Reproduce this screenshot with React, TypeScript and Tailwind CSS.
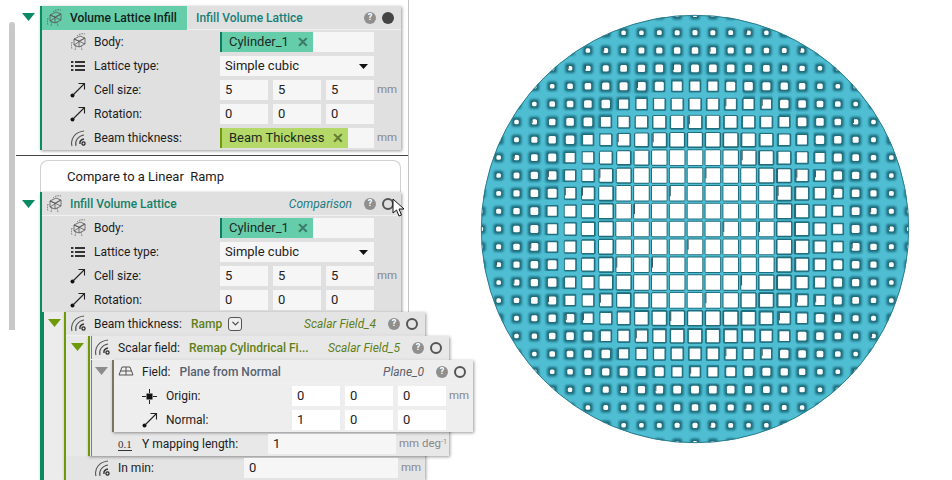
import { ChevronDown } from 'lucide-react';
import type { ReactNode } from 'react';

const font = "font-['Roboto','Liberation_Sans',sans-serif]";

function LatticeIcon() {
    return (
        <svg width="17" height="18" viewBox="0 0 17 18" fill="none" stroke="#555" strokeWidth="0.8">
            <path d="M4 6 L10 3 L15 5 L15 11 L9 14 L4 12 Z" />
            <path d="M4 6 L9 8 L15 5 M9 8 L9 14 M4 12 L15 5 M4 6 L15 11" />
            <path d="M7 3 Q10 0 15 1 M2 9 Q1 13 2 16 M6 13 L5 17 M11 13 L12 17" strokeDasharray="1.5 1" />
        </svg>
    );
}

function ListIcon() {
    return (
        <svg width="16" height="12" viewBox="0 0 16 12" fill="#333">
            <rect x="1" y="1" width="2.4" height="2" />
            <rect x="1" y="5" width="2.4" height="2" />
            <rect x="1" y="9" width="2.4" height="2" />
            <rect x="5" y="1" width="10" height="2" />
            <rect x="5" y="5" width="10" height="2" />
            <rect x="5" y="9" width="10" height="2" />
        </svg>
    );
}

function VectorIcon() {
    return (
        <svg width="16" height="16" viewBox="0 0 16 16" fill="none" stroke="#222" strokeWidth="1.1">
            <circle cx="2.5" cy="13.5" r="2" fill="#111" stroke="none" />
            <path d="M3 13 L14.5 1.5 M8.5 1.5 L14.5 1.5 L14.5 7.5" />
        </svg>
    );
}

function WavesIcon() {
    return (
        <svg width="17" height="17" viewBox="0 0 17 17" fill="none" stroke="#555" strokeWidth="1.1">
            <path d="M2 16 C0 9 5 2 14 1" />
            <path d="M6 16 C4.5 11 8 6 14 5" />
            <path d="M10 14 C9.5 11 11 9.5 14 9" strokeWidth="1.4" stroke="#333" />
            <circle cx="13.5" cy="13.5" r="1.6" stroke="#222" strokeWidth="1.2" />
        </svg>
    );
}

function OriginIcon() {
    return (
        <svg width="15" height="15" viewBox="0 0 15 15" stroke="#222" strokeWidth="1">
            <path d="M7.5 0 V4 M7.5 11 V15 M0 7.5 H4 M11 7.5 H15" />
            <rect x="4.5" y="4.5" width="6" height="6" fill="#111" stroke="none" />
        </svg>
    );
}

function PlaneIcon() {
    return (
        <svg width="16" height="11" viewBox="0 0 16 11" fill="none" stroke="#555" strokeWidth="1">
            <path d="M4 1 H12 L15 9 H1 Z M8 1 V9 M2.5 5 H13.5" />
        </svg>
    );
}

function Triangle({ color }: { color: string }) {
    return (
        <svg width="13" height="8" viewBox="0 0 13 8" className="block mx-auto">
            <polygon points="0,0 13,0 6.5,8" fill={color} />
        </svg>
    );
}

function HeaderButtons({ filled }: { filled?: boolean }) {
    return (
        <div className="flex items-center gap-[6px] ml-[12px]">
            <div className="w-3 h-3 rounded-full bg-[#8f8f8f] text-white text-[9px] font-bold flex items-center justify-center">?</div>
            <div className={filled ? 'w-3 h-3 rounded-full bg-[#444]' : 'w-3 h-3 rounded-full border-2 border-[#555]'} />
        </div>
    );
}

function Panel({ line, bg, inset, children }: { line: string; bg: string; inset?: string; children: ReactNode }) {
    return (
        <div className={`w-[361px] shrink-0 border-l-2 ${inset ?? 'shadow-[1px_1px_3px_rgba(0,0,0,0.4)]'} ${line} ${bg}`}>
            {children}
        </div>
    );
}

function Header({ icon, children, meta, metaColor, filled }: { icon: ReactNode; children: ReactNode; meta?: string; metaColor?: string; filled?: boolean }) {
    return (
        <div className="flex items-center h-6 border-b border-[#f0f0f0] pl-[4px] pr-[7px]">
            <div className="w-[24px] shrink-0">{icon}</div>
            <div className="flex items-center flex-1 min-w-0">{children}</div>
            {meta && <span className={`italic text-[12px] ${metaColor}`}>{meta}</span>}
            <HeaderButtons filled={filled} />
        </div>
    );
}

function Row({ icon, label, unit, children }: { icon: ReactNode; label: string; unit?: ReactNode; children: ReactNode }) {
    return (
        <div className="flex items-center h-6 pl-[28px]">
            <div className="w-[24px] shrink-0">{icon}</div>
            <div className="w-[126px] shrink-0 text-[12px] text-[#1c1c1c]">{label}</div>
            {children}
            {unit && <span className="ml-[3px] text-[11.5px] text-[#888] whitespace-nowrap">{unit}</span>}
        </div>
    );
}

function Fields({ values, bg }: { values: string[]; bg: string }) {
    return (
        <div className="flex w-[154px] gap-[5px]">
            {values.map((v, i) => (
                <div key={i} className={`flex-1 h-5 pl-[5px] text-[13px] leading-5 text-[#222] ${bg}`}>{v}</div>
            ))}
        </div>
    );
}

function Chip({ name, green }: { name: string; green?: boolean }) {
    return (
        <div className="flex w-[154px] h-5 bg-[#f6f6f6]">
            <div className={`flex items-center h-5 border-l-2 pl-[7px] pr-[4px] text-[13px] text-[#1c2a22] ${green ? 'border-[#6f9a0c] bg-[#b4d968]' : 'border-[#0e7c5f] bg-[#66cdaa]'}`}>
                {name}
                <span className={`ml-[8px] text-[14px] leading-none font-bold ${green ? 'text-[#5f7a35]' : 'text-[#3c7a68]'}`}>✕</span>
            </div>
        </div>
    );
}

function Select() {
    return (
        <div className="w-[154px] h-5 bg-[#f6f6f6] flex items-center justify-between pl-[5px] pr-[6px] text-[13px] text-[#222]">
            Simple cubic
            <svg width="9" height="5" viewBox="0 0 9 5"><polygon points="0,0 9,0 4.5,5" fill="#111" /></svg>
        </div>
    );
}

// ramped lattice cross-section, holes shrink towards the rim
const PITCH = 17.85;
const R = 214;
const cells: { x: number; y: number; r: number; hole: number }[] = [];
for (let i = -12; i <= 12; i++) {
    for (let j = -12; j <= 12; j++) {
        const x = i * PITCH;
        const y = j * PITCH;
        const r = Math.hypot(x, y);
        if (r > R + 8) continue;
        const hole = Math.max(4.5, Math.min(14.6, 5 + (197 - r) * 0.08));
        cells.push({ x, y, r, hole });
    }
}

function LatticeDisc() {
    return (
        <svg width="432" height="432" viewBox="-216 -216 432 432" className="block">
            <defs>
                <clipPath id="disc"><circle r={R} /></clipPath>
                <filter id="soft" x="-30%" y="-30%" width="160%" height="160%"><feGaussianBlur stdDeviation="1.1" /></filter>
            </defs>
            <g clipPath="url(#disc)">
                <circle r={R} fill="#4fbdd2" />
                <g filter="url(#soft)">
                    {cells.map((c, k) => {
                        const s = c.hole + 5;
                        return <rect key={k} x={c.x - s / 2} y={c.y - s / 2} width={s} height={s} rx="2" fill="#1a6c7c" />;
                    })}
                </g>
                {cells.filter((c) => c.r < 150).map((c, k) => {
                    const hx = c.x + PITCH / 2;
                    const hy = c.y + PITCH / 2;
                    const w = Math.max(1.3, PITCH - c.hole - 3.4);
                    return (
                        <g key={k} fill="#4fbdd2">
                            <rect x={c.x - PITCH / 2} y={hy - w / 2} width={PITCH} height={w} />
                            <rect x={hx - w / 2} y={c.y - PITCH / 2} width={w} height={PITCH} />
                            <circle cx={hx} cy={hy} r={w / 2 + 1.3} />
                        </g>
                    );
                })}
                {cells.map((c, k) => (
                    <rect key={k} x={c.x - c.hole / 2} y={c.y - c.hole / 2} width={c.hole} height={c.hole} rx={c.hole < 9 ? 1.5 : 0.5} fill="#fff" />
                ))}
                {cells.filter((_, k) => (k * 3) % 7 === 0).map((c, k) => (
                    <rect key={k} x={c.x - c.hole / 2} y={c.y - c.hole / 2} width="0.8" height={c.hole * 0.7} fill="#14313a" />
                ))}
            </g>
            <circle r={R - 0.3} fill="none" stroke="#2a7c8e" strokeWidth="1" />
        </svg>
    );
}

export default function App() {
    return (
        <div className={`relative flex w-[952px] h-[480px] overflow-hidden bg-white ${font}`}>
            <div className="w-4 shrink-0 pl-[9px] pt-[22px]">
                <div className="w-[6px] h-[308px] bg-[#c8c8c8] rounded-t-[3px]" />
            </div>

            <div className="w-[393px] shrink-0 border-r border-[#c4c4c4] pt-[6px]">
                <div className="flex">
                    <div className="w-6 shrink-0 pt-[7px]"><Triangle color="#0a8a64" /></div>
                    <Panel line="border-[#0a8a60]" bg="bg-[#e0e0e0]">
                        <div className="flex items-center h-6 border-b border-[#efefef] pr-[7px]">
                            <div className="flex items-center h-[24px] w-[145px] bg-[#66cdaa] pl-[4px] text-[12px] font-medium text-[#10231c]">
                                <div className="w-[24px] shrink-0"><LatticeIcon /></div>
                                Volume Lattice Infill
                            </div>
                            <span className="ml-[9px] flex-1 text-[12px] font-medium text-[#157f78]">Infill Volume Lattice</span>
                            <HeaderButtons filled />
                        </div>
                        <Row icon={<LatticeIcon />} label="Body:"><Chip name="Cylinder_1" /></Row>
                        <Row icon={<ListIcon />} label="Lattice type:"><Select /></Row>
                        <Row icon={<VectorIcon />} label="Cell size:" unit="mm"><Fields values={['5', '5', '5']} bg="bg-[#f6f6f6]" /></Row>
                        <Row icon={<VectorIcon />} label="Rotation:"><Fields values={['0', '0', '0']} bg="bg-[#f6f6f6]" /></Row>
                        <Row icon={<WavesIcon />} label="Beam thickness:" unit="mm"><Chip name="Beam Thickness" green /></Row>
                    </Panel>
                </div>

                <div className="h-px bg-[#444] mt-[5px]" />

                <div className="ml-6 mt-[4px] w-[361px] h-[32px] border border-b-0 border-[#d0d0d0] rounded-t-lg pl-[26px] pt-[6px] text-[13px] text-[#1c1c1c] whitespace-pre">
                    Compare to a Linear  Ramp
                </div>

                <div className="flex">
                    <div className="w-6 shrink-0 pt-[8px]"><Triangle color="#0a8a64" /></div>
                    <Panel line="border-[#0a8a60]" bg="bg-[#e0e0e0]">
                        <Header icon={<LatticeIcon />} meta="Comparison" metaColor="text-[#1f7a80]">
                            <span className="text-[12px] font-medium text-[#157f68]">Infill Volume Lattice</span>
                        </Header>
                        <Row icon={<LatticeIcon />} label="Body:"><Chip name="Cylinder_1" /></Row>
                        <Row icon={<ListIcon />} label="Lattice type:"><Select /></Row>
                        <Row icon={<VectorIcon />} label="Cell size:" unit="mm"><Fields values={['5', '5', '5']} bg="bg-[#f6f6f6]" /></Row>
                        <Row icon={<VectorIcon />} label="Rotation:"><Fields values={['0', '0', '0']} bg="bg-[#f6f6f6]" /></Row>

                        <div className="flex">
                            <div className="w-[22px] shrink-0 border-l-2 border-[#0a8a60] bg-[#ececec] pt-[7px]"><Triangle color="#6e9a0a" /></div>
                            <Panel line="border-[#6e9a0a]" bg="bg-[#e4e4e4]">
                                <Header icon={<WavesIcon />} meta="Scalar Field_4" metaColor="text-[#5f7f1a]">
                                    <span className="text-[12px] text-[#1c1c1c]">Beam thickness:</span>
                                    <span className="ml-[9px] text-[12px] font-medium text-[#5f7f1a]">Ramp</span>
                                    <span className="ml-[6px] w-[14px] h-[14px] rounded-[3px] border border-[#555] bg-[#eee] flex items-center justify-center">
                                        <ChevronDown size={11} strokeWidth={2.5} color="#444" />
                                    </span>
                                </Header>

                                <div className="flex">
                                    <div className="w-[22px] shrink-0 bg-[#e9e9e9] pt-[7px]"><Triangle color="#6e9a0a" /></div>
                                    <Panel line="border-[#6e9a0a]" bg="bg-[#e8e8e8]" inset="shadow-[inset_1px_0_0_#e8e8e8,inset_2px_0_0_#6e9a0a,1px_1px_3px_rgba(0,0,0,0.4)]">
                                        <Header icon={<WavesIcon />} meta="Scalar Field_5" metaColor="text-[#5f7f1a]">
                                            <span className="text-[12px] text-[#1c1c1c]">Scalar field:</span>
                                            <span className="ml-[9px] text-[12px] font-medium text-[#5f7f1a] whitespace-nowrap">Remap Cylindrical Fi...</span>
                                        </Header>

                                        <div className="flex">
                                            <div className="w-[22px] shrink-0 pt-[7px]"><Triangle color="#8c8c8c" /></div>
                                            <Panel line="border-[#7a7660]" bg="bg-[#eeeeee]">
                                                <Header icon={<PlaneIcon />} meta="Plane_0" metaColor="text-[#5a6068]">
                                                    <span className="text-[12px] text-[#1c1c1c]">Field:</span>
                                                    <span className="ml-[9px] text-[12px] font-medium text-[#566270]">Plane from Normal</span>
                                                </Header>
                                                <Row icon={<OriginIcon />} label="Origin:" unit="mm"><Fields values={['0', '0', '0']} bg="bg-white" /></Row>
                                                <Row icon={<VectorIcon />} label="Normal:"><Fields values={['1', '0', '0']} bg="bg-white" /></Row>
                                            </Panel>
                                        </div>

                                        <Row
                                            icon={<span className="block w-[14px] border-b border-[#333] font-['Liberation_Serif',serif] text-[11px] leading-[12px] text-[#333]">0.1</span>}
                                            label="Y mapping length:"
                                            unit={<>mm deg<sup className="text-[7px]">-1</sup></>}
                                        >
                                            <div className="w-[128px] h-5 bg-[#f6f6f6] pl-[5px] text-[13px] leading-5 text-[#222]">1</div>
                                        </Row>
                                    </Panel>
                                </div>

                                <Row icon={<WavesIcon />} label="In min:" unit="mm">
                                    <div className="w-[154px] h-5 bg-[#f6f6f6] pl-[5px] text-[13px] leading-5 text-[#222]">0</div>
                                </Row>
                            </Panel>
                        </div>
                    </Panel>
                </div>
            </div>

            <div className="ml-[70px] mt-[13px]">
                <LatticeDisc />
            </div>

            {/* mouse pointer */}
            <svg width="13" height="20" viewBox="0 0 13 20" className="absolute left-[392px] top-[198px]">
                <path d="M1 1 L1 15 L4.5 12 L7 18 L9.5 17 L7 11 L12 11 Z" fill="#fff" stroke="#111" strokeWidth="1" />
            </svg>
        </div>
    );
}
